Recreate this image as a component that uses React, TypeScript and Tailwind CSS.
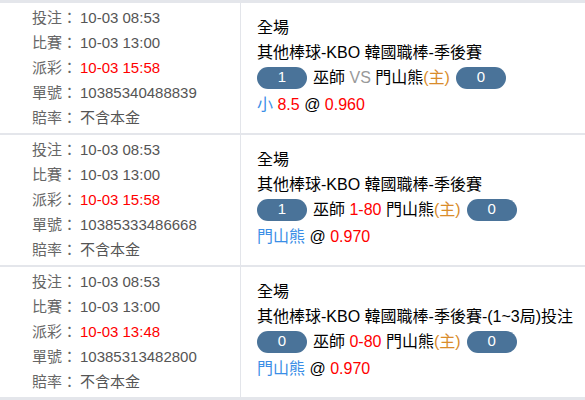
import React from "react";

type Bet = {
  bet: string;
  match: string;
  payout: string;
  no: string;
  league: string;
  home: string;
  away: string;
  mid: React.ReactNode;
  pick: React.ReactNode;
  odds: string;
};

const bets: Bet[] = [
  {
    bet: "10-03 08:53",
    match: "10-03 13:00",
    payout: "10-03 15:58",
    no: "10385340488839",
    league: "其他棒球-KBO 韓國職棒-季後賽",
    home: "1",
    away: "0",
    mid: <span className="text-[#999]">VS</span>,
    pick: (
      <>
        <span className="text-[#3a8ee6]">小</span>{" "}
        <span className="text-[#ff0000]">8.5</span>
      </>
    ),
    odds: "0.960",
  },
  {
    bet: "10-03 08:53",
    match: "10-03 13:00",
    payout: "10-03 15:58",
    no: "10385333486668",
    league: "其他棒球-KBO 韓國職棒-季後賽",
    home: "1",
    away: "0",
    mid: <span className="text-[#ff0000]">1-80</span>,
    pick: <span className="text-[#3a8ee6]">門山熊</span>,
    odds: "0.970",
  },
  {
    bet: "10-03 08:53",
    match: "10-03 13:00",
    payout: "10-03 13:48",
    no: "10385313482800",
    league: "其他棒球-KBO 韓國職棒-季後賽-(1~3局)投注",
    home: "0",
    away: "0",
    mid: <span className="text-[#ff0000]">0-80</span>,
    pick: <span className="text-[#3a8ee6]">門山熊</span>,
    odds: "0.970",
  },
];

const Row = ({ label, value, red }: { label: string; value: string; red?: boolean }) => (
  <div className="flex h-[25px] items-center">
    <span className="w-[48px] text-[#666]">{label}：</span>
    <span className={red ? "text-[#ff0000]" : "text-[#555]"}>{value}</span>
  </div>
);

const Pill = ({ n }: { n: string }) => (
  <span className="flex h-[22px] w-[50px] items-center justify-center rounded-full bg-[#4a7399] text-[15px] text-white">
    {n}
  </span>
);

const BetCard = ({ b }: { b: Bet }) => (
  <div className="flex h-[130px] bg-white">
    <div className="flex w-[241px] flex-col justify-center rounded-l-md border-r border-[#e3e5ea] pl-[32px] text-[15px]">
      <Row label="投注" value={b.bet} />
      <Row label="比賽" value={b.match} />
      <Row label="派彩" value={b.payout} red />
      <Row label="單號" value={b.no} />
      <Row label="賠率" value="不含本金" />
    </div>
    <div className="flex flex-1 flex-col justify-center pb-[3px] pl-[16px] text-[16px] text-black">
      <div className="flex h-[25px] items-center">全場</div>
      <div className="flex h-[25px] items-center">{b.league}</div>
      <div className="flex h-[24px] items-center gap-[6px]">
        <Pill n={b.home} />
        <span>
          巫師 {b.mid} 門山熊<span className="text-[#d98c2b]">(主)</span>
        </span>
        <Pill n={b.away} />
      </div>
      <div className="mt-[3px] flex h-[25px] items-center">
        <span>
          {b.pick} @ <span className="text-[#ff0000]">{b.odds}</span>
        </span>
      </div>
    </div>
  </div>
);

export default function App() {
  return (
    <div
      className="flex h-[400px] w-[585px] flex-col gap-[2px] overflow-hidden bg-[#e4e6eb] pt-[3px]"
      style={{ fontFamily: '"Liberation Sans", "Noto Sans CJK TC", sans-serif' }}
    >
      {bets.map((b, i) => (
        <BetCard key={i} b={b} />
      ))}
    </div>
  );
}
